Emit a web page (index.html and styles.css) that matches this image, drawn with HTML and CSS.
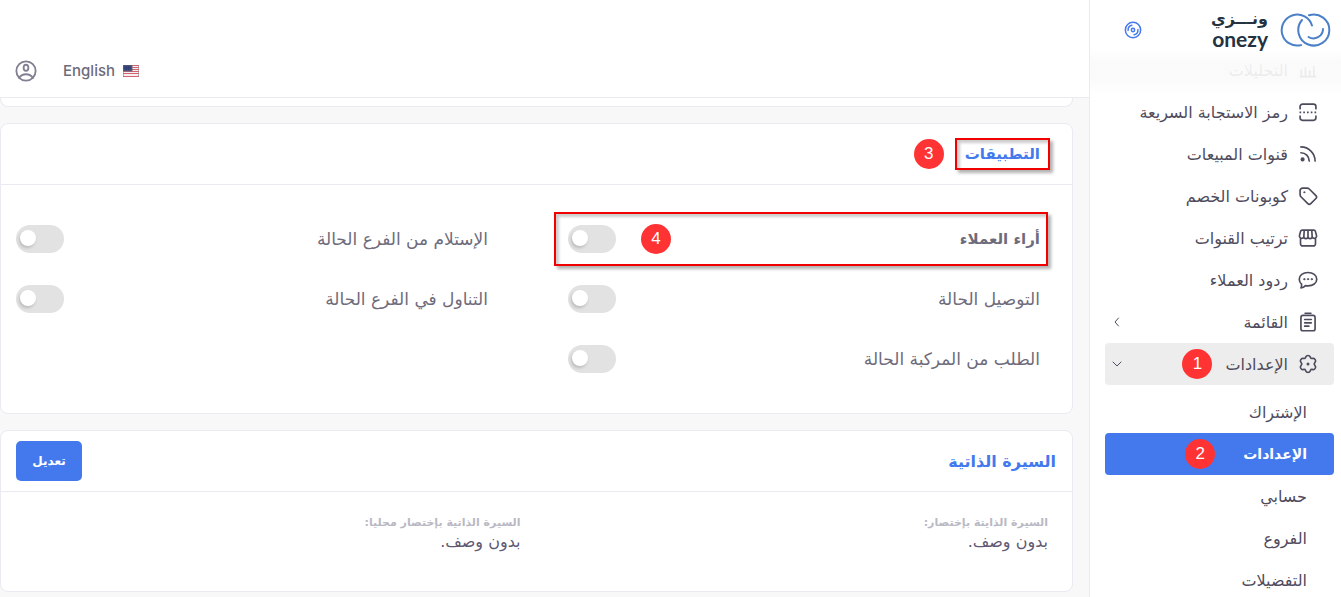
FILE: index.html
```html
<!DOCTYPE html>
<html lang="ar" dir="rtl">
<head>
    <meta charset="UTF-8">
    <meta name="viewport" content="width=device-width, initial-scale=1.0">
    <title>الإعدادات</title>
    <link rel="stylesheet" href="styles.css">
</head>
<body>
    <div class="layout">
        <aside class="sidebar">
            <div class="brand">
                <a class="brand-link" href="#">
                    <svg class="brand-logo" viewBox="0 0 51 36" aria-hidden="true">
                        <path d="M32 13.5A15.5 15.5 0 1 0 21 33.1"/>
                        <path d="M29 3.3A15.5 15.5 0 1 1 22 8"/>
                        <path d="M43 17A9.5 9.5 0 0 1 28.5 25"/>
                    </svg>
                    <span class="brand-name">
                        <span class="brand-ar">ونـــزي</span>
                        <span class="brand-en">onezy</span>
                    </span>
                </a>
                <button class="icon-btn pin" type="button" aria-label="تثبيت القائمة">
                    <svg viewBox="0 0 24 24"><circle cx="12" cy="12" r="10.2"/><circle cx="12" cy="12" r="2.2"/><path d="M5.500 12.500A6.500 6.500 0 0 1 10.500 5.600M18.500 11.500a6.500 6.500 0 0 1-5 6.900"/></svg>
                </button>
            </div>

            <nav class="menu">
                <a class="item" href="#">
                    <svg viewBox="0 0 24 24"><path d="M4 20v-8M9 20V9M14 20v-7M19 20V8M3 20h18"/></svg>
                    <span>التحليلات</span>
                </a>
                <a class="item" href="#">
                    <svg viewBox="0 0 24 24"><path d="M2.500 8V5.500a3 3 0 0 1 3-3h13a3 3 0 0 1 3 3V8M2.500 17v2a3 3 0 0 0 3 3h13a3 3 0 0 0 3-3v-2"/><path stroke-linecap="butt" stroke-dasharray="2 2.500" d="M1.800 12.500h21"/></svg>
                    <span>رمز الاستجابة السريعة</span>
                </a>
                <a class="item" href="#">
                    <svg viewBox="0 0 24 24"><path d="M3.500 3.500a17 17 0 0 1 17 17M3.500 10.500a10 10 0 0 1 10 10"/><circle class="solid" cx="5.500" cy="18.500" r="1.500"/></svg>
                    <span>قنوات المبيعات</span>
                </a>
                <a class="item" href="#">
                    <svg viewBox="0 0 24 24"><path d="M2.500 5.500v5c0 1 .4 1.800 1 2.400l8.300 8.300a2.500 2.500 0 0 0 3.500 0l6.200-6.200a2.500 2.500 0 0 0 0-3.500L13.500 3.600c-.7-.7-1.500-1.100-2.500-1.100H5.500a3 3 0 0 0-3 3z"/><circle class="solid dot" cx="7.500" cy="7.500" r=".7"/></svg>
                    <span>كوبونات الخصم</span>
                </a>
                <a class="item" href="#">
                    <svg viewBox="0 0 24 24"><path d="M5 2.500h14a2 2 0 0 1 1.900 1.500l1.300 5c.4 2-.9 3.500-2.700 3.500a2.600 2.600 0 0 1-2.500-2.300 2.500 2.500 0 0 1-5 0 2.500 2.500 0 0 1-5 0 2.600 2.600 0 0 1-2.500 2.300C2.700 12.500 1.400 11 1.800 9l1.300-5A2 2 0 0 1 5 2.500zM7.500 2.500L7 10M12 2.500V10M16.500 2.500L17 10M3 12.500V19a2.500 2.500 0 0 0 2.500 2.500h13A2.500 2.500 0 0 0 21 19v-6.500"/></svg>
                    <span>ترتيب القنوات</span>
                </a>
                <a class="item" href="#">
                    <svg viewBox="0 0 24 24"><path d="M12 3c6 0 10.500 3.200 10.500 8s-4.500 8-10.500 8c-1 0-2-.1-3-.3-1.300 1.400-3 2.500-5.500 2.800.8-1.200 1-2.700.8-4.500C2.500 15.500 1.500 13.500 1.500 11 1.500 6.200 6 3 12 3z"/><circle class="solid dot" cx="7.500" cy="11" r=".8"/><circle class="solid dot" cx="12" cy="11" r=".8"/><circle class="solid dot" cx="16.500" cy="11" r=".8"/></svg>
                    <span>ردود العملاء</span>
                </a>
                <a class="item" href="#">
                    <svg viewBox="0 0 24 24"><rect x="3.500" y="4" width="17" height="18.500" rx="2.500"/><path d="M8.500 1.500h7M8 9h8M8 13h8M8 17h5"/></svg>
                    <span>القائمة</span>
                    <svg class="arrow" viewBox="0 0 12 12"><path d="M7.500 2L4 6l3.500 4"/></svg>
                </a>
                <a class="item open" href="#">
                    <svg viewBox="0 0 24 24"><path d="M9.500 3.200C10.200 1.300 13.800 1.300 14.500 3.200l.5 1.200c.3.700 1 1.100 1.800 1l1.300-.2c2-.3 3.900 2.900 2.600 4.400l-.8 1.100c-.5.600-.5 1.900 0 2.500l.8 1.100c1.300 1.600-.6 4.700-2.600 4.400l-1.300-.2c-.8-.1-1.500.3-1.800 1l-.5 1.200c-.7 1.900-4.300 1.900-5 0L9 19.500c-.3-.7-1-1.100-1.800-1l-1.300.2c-2 .3-3.900-2.800-2.600-4.400l.8-1.100c.5-.6.5-1.900 0-2.500l-.8-1.100C2 8.100 3.900 4.900 5.900 5.200l1.300.2c.8.1 1.500-.3 1.800-1z"/><circle class="solid" cx="12" cy="12" r=".8"/></svg>
                    <span>الإعدادات</span>
                    <b class="step">1</b>
                    <svg class="arrow" viewBox="0 0 12 12"><path d="M2 4l4 4 4-4"/></svg>
                </a>
                <div class="submenu">
                    <a class="item" href="#">الإشتراك</a>
                    <a class="item active" href="#">الإعدادات <b class="step">2</b></a>
                    <a class="item" href="#">حسابي</a>
                    <a class="item" href="#">الفروع</a>
                    <a class="item" href="#">التفضيلات</a>
                </div>
            </nav>
        </aside>

        <div class="content">
            <header class="navbar">
                <a class="lang" href="#">
                    <svg class="flag" viewBox="0 0 16 12" aria-hidden="true">
                        <rect width="16" height="12" fill="#f7eef0"/>
                        <path d="M0 .5h16M0 2.500h16M0 4.500h16M0 6.500h16M0 8.500h16M0 11.500h16" stroke="#cf6570"/>
                        <rect width="9" height="6" fill="#303c70"/>
                        <path d="M1 1.500h7M1 3h7M1 4.500h7" stroke="#6672a0" stroke-width=".5" stroke-dasharray=".6 1"/>
                    </svg>
                    <span>English</span>
                </a>
                <button class="icon-btn user" type="button" aria-label="الحساب">
                    <svg viewBox="0 0 24 24"><circle cx="12" cy="12" r="10.500"/><ellipse cx="12" cy="8.500" rx="2.600" ry="3.300"/><path d="M4.500 19.500c2-3 4.500-4 7.500-4s5.500 1 7.500 4"/></svg>
                </button>
            </header>

            <main class="main">
                <section class="card card-prev"></section>

                <section class="card">
                    <div class="card-header indent">
                        <h2 class="card-title marked">التطبيقات</h2>
                        <b class="step">3</b>
                    </div>
                    <div class="switches">
                        <div class="switch-row marked">
                            <label class="bold" for="reviews">أراء العملاء</label>
                            <b class="step">4</b>
                            <input class="switch" type="checkbox" id="reviews">
                        </div>
                        <div class="switch-row">
                            <label for="pickup">الإستلام من الفرع الحالة</label>
                            <input class="switch" type="checkbox" id="pickup">
                        </div>
                        <div class="switch-row">
                            <label for="delivery">التوصيل الحالة</label>
                            <input class="switch" type="checkbox" id="delivery">
                        </div>
                        <div class="switch-row">
                            <label for="dinein">التناول في الفرع الحالة</label>
                            <input class="switch" type="checkbox" id="dinein">
                        </div>
                        <div class="switch-row">
                            <label for="car">الطلب من المركبة الحالة</label>
                            <input class="switch" type="checkbox" id="car">
                        </div>
                    </div>
                </section>

                <section class="card">
                    <div class="card-header">
                        <h2 class="card-title">السيرة الذاتية</h2>
                        <button class="btn" type="button">تعديل</button>
                    </div>
                    <dl class="bio">
                        <div>
                            <dt>السيرة الذايتة بإختصار:</dt>
                            <dd>بدون وصف.</dd>
                        </div>
                        <div>
                            <dt>السيرة الذاتية بإختصار محليا:</dt>
                            <dd>بدون وصف.</dd>
                        </div>
                    </dl>
                </section>
            </main>
        </div>
    </div>
</body>
</html>
```
FILE: styles.css
```css
* {
    box-sizing: border-box;
}

body {
    margin: 0;
    height: 100vh;
    overflow: hidden;
    background-color: #f8f8f8;
    font-family: "DejaVu Sans", sans-serif;
    font-size: 16px;
    color: #5e5873;
}

a {
    color: inherit;
    text-decoration: none;
}

svg {
    fill: none;
    stroke: currentColor;
    stroke-width: 2;
    stroke-linecap: round;
    stroke-linejoin: round;
}

.solid {
    fill: currentColor;
}

.dot {
    stroke-width: 1;
}

.layout {
    display: flex;
    height: 100%;
}

/* sidebar */
.sidebar {
    flex: 0 0 252px;
    background-color: #fff;
    border-left: 1px solid #ebe9f1;
    color: #4f4b5c;
    overflow: hidden;
}

.brand {
    position: relative;
    display: flex;
    align-items: center;
    justify-content: space-between;
    height: 49px;
    padding: 10px 10px 0 34px;
}

/* fade over the scrolled menu */
.brand::after {
    content: "";
    position: absolute;
    top: 49px;
    left: 0;
    right: 0;
    height: 46px;
    background: linear-gradient(#fff, rgba(250, 250, 250, 0.94) 30%, rgba(250, 250, 250, 0.9) 65%, rgba(255, 255, 255, 0));
    z-index: 1;
}

.brand-link {
    position: relative;
    z-index: 2;
    display: flex;
    align-items: center;
    gap: 12px;
}

.brand-logo {
    width: 51px;
    height: 36px;
    color: #4a80c8;
}

.brand-name {
    display: flex;
    flex-direction: column;
    color: #25323f;
}

.brand-ar {
    font-size: 16px;
    font-weight: bold;
    line-height: 18px;
}

.brand-en {
    font-family: Lato, sans-serif;
    font-size: 21px;
    font-weight: bold;
    line-height: 22px;
}

.icon-btn {
    display: flex;
    padding: 0;
    border: 0;
    background: none;
    cursor: pointer;
}

.pin svg {
    width: 18px;
    height: 18px;
    color: #4479ee;
}

.menu {
    padding: 0 7px 0 15px;
}

.item {
    display: flex;
    align-items: center;
    height: 42px;
    padding: 0 16px 0 6px;
    border-radius: 4px;
}

.item svg {
    width: 20px;
    height: 20px;
    margin-left: 10px;
}

.item .arrow {
    width: 12px;
    height: 12px;
    margin: 0 auto 0 0;
    stroke-width: 1;
}

.item .step {
    margin-right: 13px;
}

.open {
    background-color: #ededed;
}

.submenu {
    padding-top: 6px;
}

.submenu .item {
    padding-right: 27px;
}

.submenu .active {
    background-color: #4479ee;
    color: #fff;
    font-size: 14px;
    font-weight: bold;
}

.submenu .step {
    margin-right: 28px;
}

/* numbered steps */
.step {
    flex: none;
    width: 30px;
    height: 30px;
    border-radius: 50%;
    background-color: #ff3333;
    color: #fff;
    font: 17px/30px "Liberation Sans", sans-serif;
    text-align: center;
}

.marked {
    position: relative;
}

.marked::after {
    content: "";
    position: absolute;
    border: 2px solid #f00000;
    box-shadow: 3px 3px 3px rgba(0, 0, 0, 0.3), inset 3px 3px 3px rgba(0, 0, 0, 0.2);
    pointer-events: none;
}

/* top bar */
.content {
    flex: 1;
    min-width: 0;
}

.navbar {
    display: flex;
    align-items: flex-end;
    justify-content: flex-end;
    gap: 26px;
    height: 98px;
    padding: 0 15px 15px;
    background-color: #fff;
    border-bottom: 1px solid #ebe9f1;
    color: #6e6b7b;
}

.lang {
    display: flex;
    align-items: center;
    gap: 8px;
    font-family: Inter, sans-serif;
    font-size: 15px;
    font-weight: 500;
    line-height: 22px;
}

.flag {
    width: 16px;
    height: 12px;
    stroke-width: 1;
    stroke-linecap: butt;
}

.user svg {
    width: 22px;
    height: 22px;
    color: #827f93;
}

/* cards */
.main {
    padding-right: 16px;
}

.card {
    margin-bottom: 16px;
    background-color: #fff;
    border: 1px solid #ebe9f1;
    border-radius: 8px;
}

.card-prev {
    height: 9px;
    border-top: 0;
    border-radius: 0 0 8px 8px;
}

.card-header {
    display: flex;
    align-items: center;
    height: 61px;
    padding: 0 16px 0 15px;
    border-bottom: 1px solid #ebe9f1;
}

.indent {
    padding-right: 32px;
}

.card-title {
    margin: 0;
    font-size: 16px;
    font-weight: bold;
    color: #4479ee;
}

.card-title.marked {
    font-size: 15px;
}

.card-title.marked::after {
    inset: -7px -10px;
}

.card-header .step {
    margin-right: 21px;
}

.btn {
    margin-right: auto;
    width: 66px;
    height: 40px;
    border: 0;
    border-radius: 5px;
    background-color: #4479ee;
    color: #fff;
    font-family: inherit;
    font-size: 12px;
    font-weight: bold;
}

.switches {
    display: grid;
    grid-template-columns: 1fr 1fr;
    column-gap: 80px;
    padding: 24px 32px 24px 15px;
    font-size: 17px;
    color: #6e6b7b;
}

.switch-row {
    display: flex;
    align-items: center;
    height: 60px;
}

.switch-row.marked::after {
    inset: 3px -8px 3px -14px;
}

.switch-row .step {
    margin-right: auto;
}

.switch-row .step + .switch {
    margin-right: 25px;
}

.bold {
    font-size: 15px;
    font-weight: bold;
}

.switch {
    appearance: none;
    width: 48px;
    height: 28px;
    margin: 0 auto 0 0;
    padding: 5px 4px;
    border-radius: 14px;
    background-color: #e2e2e2;
    direction: ltr;
}

.switch::before {
    content: "";
    display: block;
    width: 16px;
    height: 16px;
    border-radius: 50%;
    background-color: #fff;
    box-shadow: -1px 2px 3px rgba(34, 41, 47, 0.2);
}

.switch:checked {
    background-color: #4479ee;
}

.bio {
    display: grid;
    grid-template-columns: 1fr 1fr;
    column-gap: 8px;
    margin: 0;
    padding: 22px 24px 39px 0;
}

.bio dt {
    font-size: 11px;
    font-weight: bold;
    line-height: 18px;
    color: #b9b9c3;
}

.bio dd {
    margin: 0;
    font-size: 16px;
    line-height: 20px;
}
```
